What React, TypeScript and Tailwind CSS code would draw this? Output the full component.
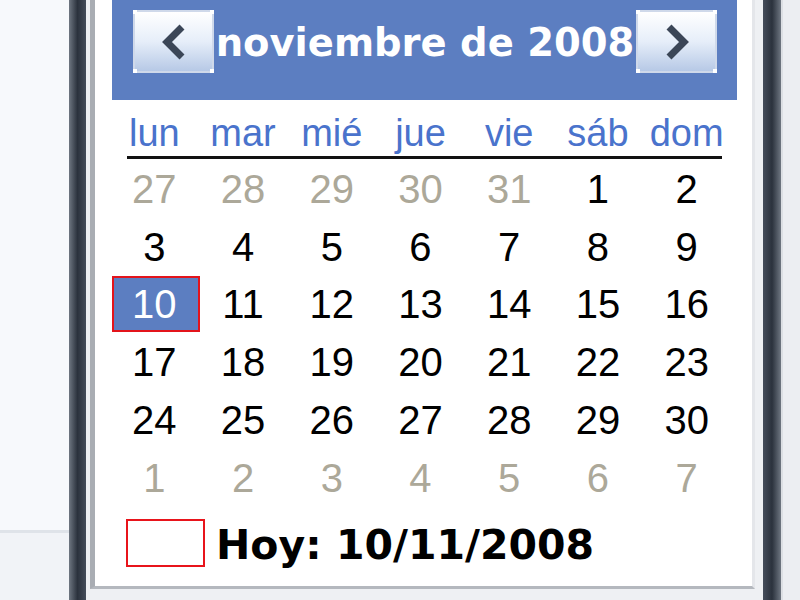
import React from 'react';

const WEEKDAYS = ['lun', 'mar', 'mié', 'jue', 'vie', 'sáb', 'dom'];

type Day = { n: number; muted: boolean };

// November 2008, weeks starting on Monday, padded with days of the
// neighbouring months
const buildDays = (): Day[] => {
  const days: Day[] = [];
  [27, 28, 29, 30, 31].forEach(n => days.push({ n, muted: true }));
  for (let n = 1; n <= 30; n++) days.push({ n, muted: false });
  for (let n = 1; n <= 7; n++) days.push({ n, muted: true });
  return days;
};

const SELECTED = 10;

const regular = { fontFamily: '"Liberation Sans", Arial, sans-serif' };
const bold = { fontFamily: '"DejaVu Sans", Verdana, sans-serif' };

const NavButton: React.FC<{ dir: 'prev' | 'next' }> = ({ dir }) => (
  <button className="relative w-[81px] h-[63px] border-2 border-[#cfd9ea] bg-gradient-to-b from-[#ffffff] via-[#e6eef9] to-[#b7c9e6] flex items-center justify-center">
    <span className="absolute -left-[2px] -top-[2px] w-[4px] h-[4px] bg-white" />
    <span className="absolute -right-[2px] -top-[2px] w-[4px] h-[4px] bg-white" />
    <span className="absolute -left-[2px] -bottom-[2px] w-[4px] h-[4px] bg-white" />
    <span className="absolute -right-[2px] -bottom-[2px] w-[4px] h-[4px] bg-white" />
    <svg width="26" height="36" viewBox="0 0 26 36">
      {dir === 'prev' ? (
        <path d="M21 3 L6 18 L21 33" fill="none" stroke="#3b4657" strokeWidth="7" strokeLinejoin="miter" />
      ) : (
        <path d="M5 3 L20 18 L5 33" fill="none" stroke="#3b4657" strokeWidth="7" strokeLinejoin="miter" />
      )}
    </svg>
  </button>
);

const App: React.FC = () => {
  const days = buildDays();

  return (
    <div className="w-[800px] h-[600px] flex overflow-hidden bg-[#f4f6f9]">
      {/* desktop area on the left */}
      <div className="w-[69px] flex flex-col">
        <div className="h-[533px] bg-[#f7f9fc] border-b-[3px] border-[#dfe3e9]" />
        <div className="flex-1 bg-[#f1f3f7]" />
      </div>

      {/* dark window frame */}
      <div className="w-[17px] bg-gradient-to-r from-[#6f7782] via-[#2b323d] to-[#454d5a]" />

      {/* dialog body */}
      <div className="w-[677px] bg-[#eef0f3] pl-[4px] pr-[8px] flex flex-col">
        <div className="h-[589px] bg-white border-l-[5px] border-r-[3px] border-b-[3px] border-l-[#a9adb3] border-r-[#e4e6ea] border-b-[#b4b8be] flex flex-col pl-[15px]">
          <div className="w-[627px] flex flex-col">
            {/* month title bar */}
            <div className="h-[100px] bg-[#5c7ec1] flex items-start justify-between pt-[10px] pl-[21px] pr-[20px] ml-[2px] w-[625px]">
              <NavButton dir="prev" />
              <div className="flex-1 h-[63px] pt-[4px] flex items-center justify-center text-white font-bold text-[38.5px] whitespace-nowrap leading-none" style={bold}>
                noviembre de 2008
              </div>
              <NavButton dir="next" />
            </div>

            {/* weekday names */}
            <div className="grid grid-cols-7 w-[621px] h-[56px] items-center pt-[10px]" style={regular}>
              {WEEKDAYS.map(w => (
                <div key={w} className="text-center text-[38px] leading-none text-[#4a73cc]">
                  {w}
                </div>
              ))}
            </div>
            <div className="ml-[17px] w-[595px] h-[3px] bg-[#111]" />

            {/* day grid */}
            <div className="grid grid-cols-7 w-[621px] mt-[1px]" style={regular}>
              {days.map((d, i) => {
                const selected = !d.muted && d.n === SELECTED;
                return (
                  <div key={i} className="h-[57.8px] flex items-center justify-center">
                    {selected ? (
                      <div className="shrink-0 ml-[4px] w-[88px] h-[56px] bg-[#5c7ec1] border-2 border-[#e3141b] flex items-center justify-center pr-[4px] text-white text-[40px] leading-none">
                        {d.n}
                      </div>
                    ) : (
                      <span className={`text-[40px] leading-none ${d.muted ? 'text-[#aca899]' : 'text-black'}`}>
                        {d.n}
                      </span>
                    )}
                  </div>
                );
              })}
            </div>

            {/* today */}
            <div className="flex items-center mt-[12px] pl-[16px] gap-[11px]">
              <div className="w-[79px] h-[48px] border-2 border-[#e8141b]" />
              <span className="pt-[6px] text-[41px] font-bold leading-none text-black whitespace-nowrap" style={bold}>
                Hoy: 10/11/2008
              </span>
            </div>
          </div>
        </div>
      </div>

      {/* right window frame */}
      <div className="w-[18px] bg-gradient-to-r from-[#454d5a] via-[#2b323d] to-[#6f7782]" />
      <div className="flex-1 bg-[#eceef2] border-l-[2px] border-[#dcdfe4]" />
    </div>
  );
};

export default App;
